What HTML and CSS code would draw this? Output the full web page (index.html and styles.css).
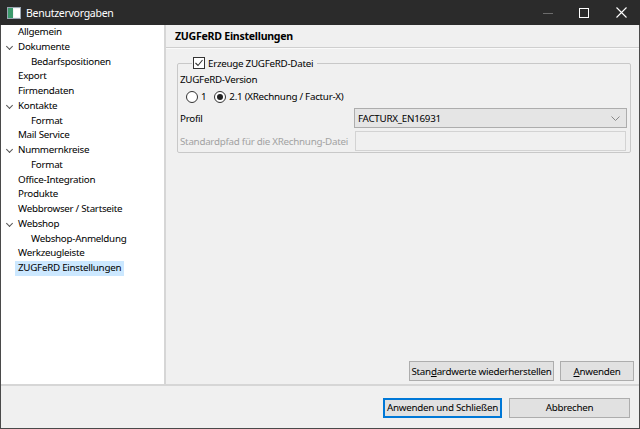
FILE: index.html
```html
<!DOCTYPE html>
<html lang="de">
<head>
    <meta charset="UTF-8">
    <title>Benutzervorgaben</title>
    <link rel="stylesheet" href="styles.css">
</head>
<body>
<div class="window">

    <div class="titlebar">
        <svg class="app-icon" width="14" height="12" viewBox="0 0 14 12">
            <rect x="0.5" y="0.5" width="13" height="11" fill="#f4f4f4" stroke="#9aa6b2"/>
            <rect x="1" y="1" width="5" height="10" fill="#3c9a6c"/>
            <rect x="7" y="2" width="6" height="8" fill="#ffffff"/>
        </svg>
        <span class="title">Benutzervorgaben</span>
        <div class="controls">
            <span class="ctl min">
                <svg width="10" height="10" viewBox="0 0 10 10"><path d="M0 5.5h10" stroke="#6c6c6c" stroke-width="1"/></svg>
            </span>
            <span class="ctl">
                <svg width="10" height="10" viewBox="0 0 10 10"><rect x="0.5" y="0.5" width="9" height="9" fill="none" stroke="#fff"/></svg>
            </span>
            <span class="ctl">
                <svg width="11" height="11" viewBox="0 0 11 11"><path d="M0.5 0.5l10 10M10.5 0.5l-10 10" stroke="#fff" stroke-width="1.1"/></svg>
            </span>
        </div>
    </div>

    <div class="main">
        <!-- Navigation tree -->
        <ul class="tree">
            <li class="node">Allgemein</li>
            <li class="node open">Dokumente</li>
            <li class="node child">Bedarfspositionen</li>
            <li class="node">Export</li>
            <li class="node">Firmendaten</li>
            <li class="node open">Kontakte</li>
            <li class="node child">Format</li>
            <li class="node">Mail Service</li>
            <li class="node open">Nummernkreise</li>
            <li class="node child">Format</li>
            <li class="node">Office-Integration</li>
            <li class="node">Produkte</li>
            <li class="node">Webbrowser / Startseite</li>
            <li class="node open">Webshop</li>
            <li class="node child">Webshop-Anmeldung</li>
            <li class="node">Werkzeugleiste</li>
            <li class="node"><span class="selected">ZUGFeRD Einstellungen</span></li>
        </ul>

        <!-- Settings page -->
        <div class="page">
            <div class="page-title">ZUGFeRD Einstellungen</div>

            <div class="page-body">
                <fieldset class="group">
                    <legend>
                        <span class="checkbox checked">
                            <svg width="10" height="10" viewBox="0 0 10 10"><path d="M1.5 5l2.5 2.5 4.5-5.5" fill="none" stroke="#333" stroke-width="1.1"/></svg>
                        </span>
                        Erzeuge ZUGFeRD-Datei
                    </legend>

                    <div class="label">ZUGFeRD-Version</div>
                    <div class="radios">
                        <span class="radio"><span class="dot"></span>1</span>
                        <span class="radio on"><span class="dot"></span>2.1 (XRechnung / Factur-X)</span>
                    </div>

                    <div class="field-row">
                        <span class="field-label">Profil</span>
                        <div class="combo">
                            <span>FACTURX_EN16931</span>
                            <svg width="9" height="5" viewBox="0 0 9 5"><path d="M0.5 0.5l4 4 4-4" fill="none" stroke="#888" stroke-width="1"/></svg>
                        </div>
                    </div>

                    <div class="field-row">
                        <span class="field-label disabled">Standardpfad für die XRechnung-Datei</span>
                        <div class="textfield"></div>
                    </div>
                </fieldset>
            </div>

            <div class="page-buttons">
                <button class="btn wide">Stan<u>d</u>ardwerte wiederherstellen</button>
                <button class="btn apply"><u>A</u>nwenden</button>
            </div>
        </div>
    </div>

    <div class="footer">
        <button class="btn default">Anwenden und Schließen</button>
        <button class="btn cancel">Abbrechen</button>
    </div>

</div>
</body>
</html>
```

FILE: styles.css
```css
body {
    margin: 0;
    width: 640px;
    height: 429px;
    overflow: hidden;
    font-family: "Noto Sans", "Open Sans", sans-serif;
    font-size: 9.8px;
    letter-spacing: -0.27px;
    color: #000;
    background: #f0f0f0;
}

.window {
    display: flex;
    flex-direction: column;
    height: 429px;
    box-sizing: border-box;
    border-left: 1px solid #4a4a4a;
    border-right: 1px solid #4a4a4a;
    border-bottom: 1px solid #4a4a4a;
}

.titlebar {
    display: flex;
    align-items: center;
    height: 25px;
    flex-shrink: 0;
    margin: 0 -1px;
    background: #2b2b2b;
    color: #fff;
    font-size: 10.5px;
}

.app-icon {
    margin-left: 7px;
    margin-right: 5px;
}

.title {
    flex: 1;
}

.controls {
    display: flex;
    height: 100%;
}

.ctl {
    display: flex;
    align-items: center;
    justify-content: center;
    width: 36px;
    height: 100%;
}

.ctl:last-child {
    width: 38px;
}

.main {
    display: flex;
    height: 359px;
    flex-shrink: 0;
}

.tree {
    list-style: none;
    margin: 0;
    padding: 0;
    width: 163px;
    flex-shrink: 0;
    background: #fff;
    border-right: 2px solid #d6d6d6;
}

.node {
    position: relative;
    height: 14.75px;
    line-height: 14.75px;
    padding-left: 17px;
    white-space: nowrap;
}

.node.child {
    padding-left: 30px;
}

.node.open::before {
    content: "";
    position: absolute;
    left: 6px;
    top: 4px;
    width: 4px;
    height: 4px;
    border-right: 1px solid #555;
    border-bottom: 1px solid #555;
    transform: rotate(45deg);
}

.selected {
    display: inline-block;
    margin-left: -3px;
    padding: 0 3px;
    background: #cce8ff;
}

.page {
    flex: 1;
    display: flex;
    flex-direction: column;
}

.page-title {
    height: 22px;
    line-height: 22px;
    padding-left: 9px;
    font-size: 10.6px;
    font-weight: bold;
    border-bottom: 1px solid #cfcfcf;
    box-shadow: 0 1px 0 #fafafa;
}

.page-body {
    flex: 1;
    padding: 8px 8px 0 11px;
}

.group {
    margin: 0;
    padding: 0 3px 1px 2px;
    border: 1px solid #c8c8c8;
    border-radius: 2px;
}

.group legend {
    display: flex;
    align-items: center;
    margin-left: 12px;
    padding: 0 4px 0 1px;
    height: 14px;
}

.checkbox {
    display: inline-flex;
    align-items: center;
    justify-content: center;
    width: 10px;
    height: 10px;
    margin-right: 3px;
    border: 1px solid #333;
    background: #fff;
}

.label {
    height: 17px;
    line-height: 17px;
    margin-top: 1px;
}

.radios {
    display: flex;
    height: 17px;
    align-items: center;
    padding-left: 6px;
}

.radio {
    display: inline-flex;
    align-items: center;
    margin-right: 8px;
}

.dot {
    position: relative;
    width: 10px;
    height: 10px;
    margin-right: 3px;
    border: 1px solid #333;
    border-radius: 50%;
    background: #fff;
}

.radio.on .dot::after {
    content: "";
    position: absolute;
    left: 2px;
    top: 2px;
    width: 6px;
    height: 6px;
    border-radius: 50%;
    background: #222;
}

.field-row {
    display: flex;
    align-items: center;
    margin-top: 3px;
}

.field-label {
    width: 174px;
    flex-shrink: 0;
    white-space: nowrap;
}

.field-label.disabled {
    color: #a2a2a2;
}

.combo {
    flex: 1;
    display: flex;
    align-items: center;
    justify-content: space-between;
    height: 18px;
    padding: 0 6px 0 3px;
    background: #e5e5e5;
    border: 1px solid #adadad;
}

.textfield {
    flex: 1;
    height: 18px;
    margin: 0 1px;
    background: #f0f0f0;
    border: 1px solid #d3d3d3;
}

.page-buttons {
    display: flex;
    justify-content: flex-end;
    gap: 6px;
    padding: 0 5px 3px 0;
}

.btn {
    height: 20px;
    padding: 0;
    font-family: inherit;
    font-size: 9.8px;
    letter-spacing: -0.27px;
    white-space: nowrap;
    color: #000;
    background: #e1e1e1;
    border: 1px solid #adadad;
}

.btn u {
    text-underline-offset: 1px;
}

.btn.wide {
    width: 145px;
}

.btn.apply {
    width: 74px;
}

.footer {
    flex: 1;
    display: flex;
    justify-content: flex-end;
    align-items: center;
    gap: 7px;
    padding-right: 9px;
    padding-top: 1px;
    border-top: 2px solid #d6d6d6;
}

.btn.default {
    width: 119px;
    border: 1px solid #0078d7;
    box-shadow: inset 0 0 0 1px #0078d7;
}

.btn.cancel {
    width: 121px;
}
```
